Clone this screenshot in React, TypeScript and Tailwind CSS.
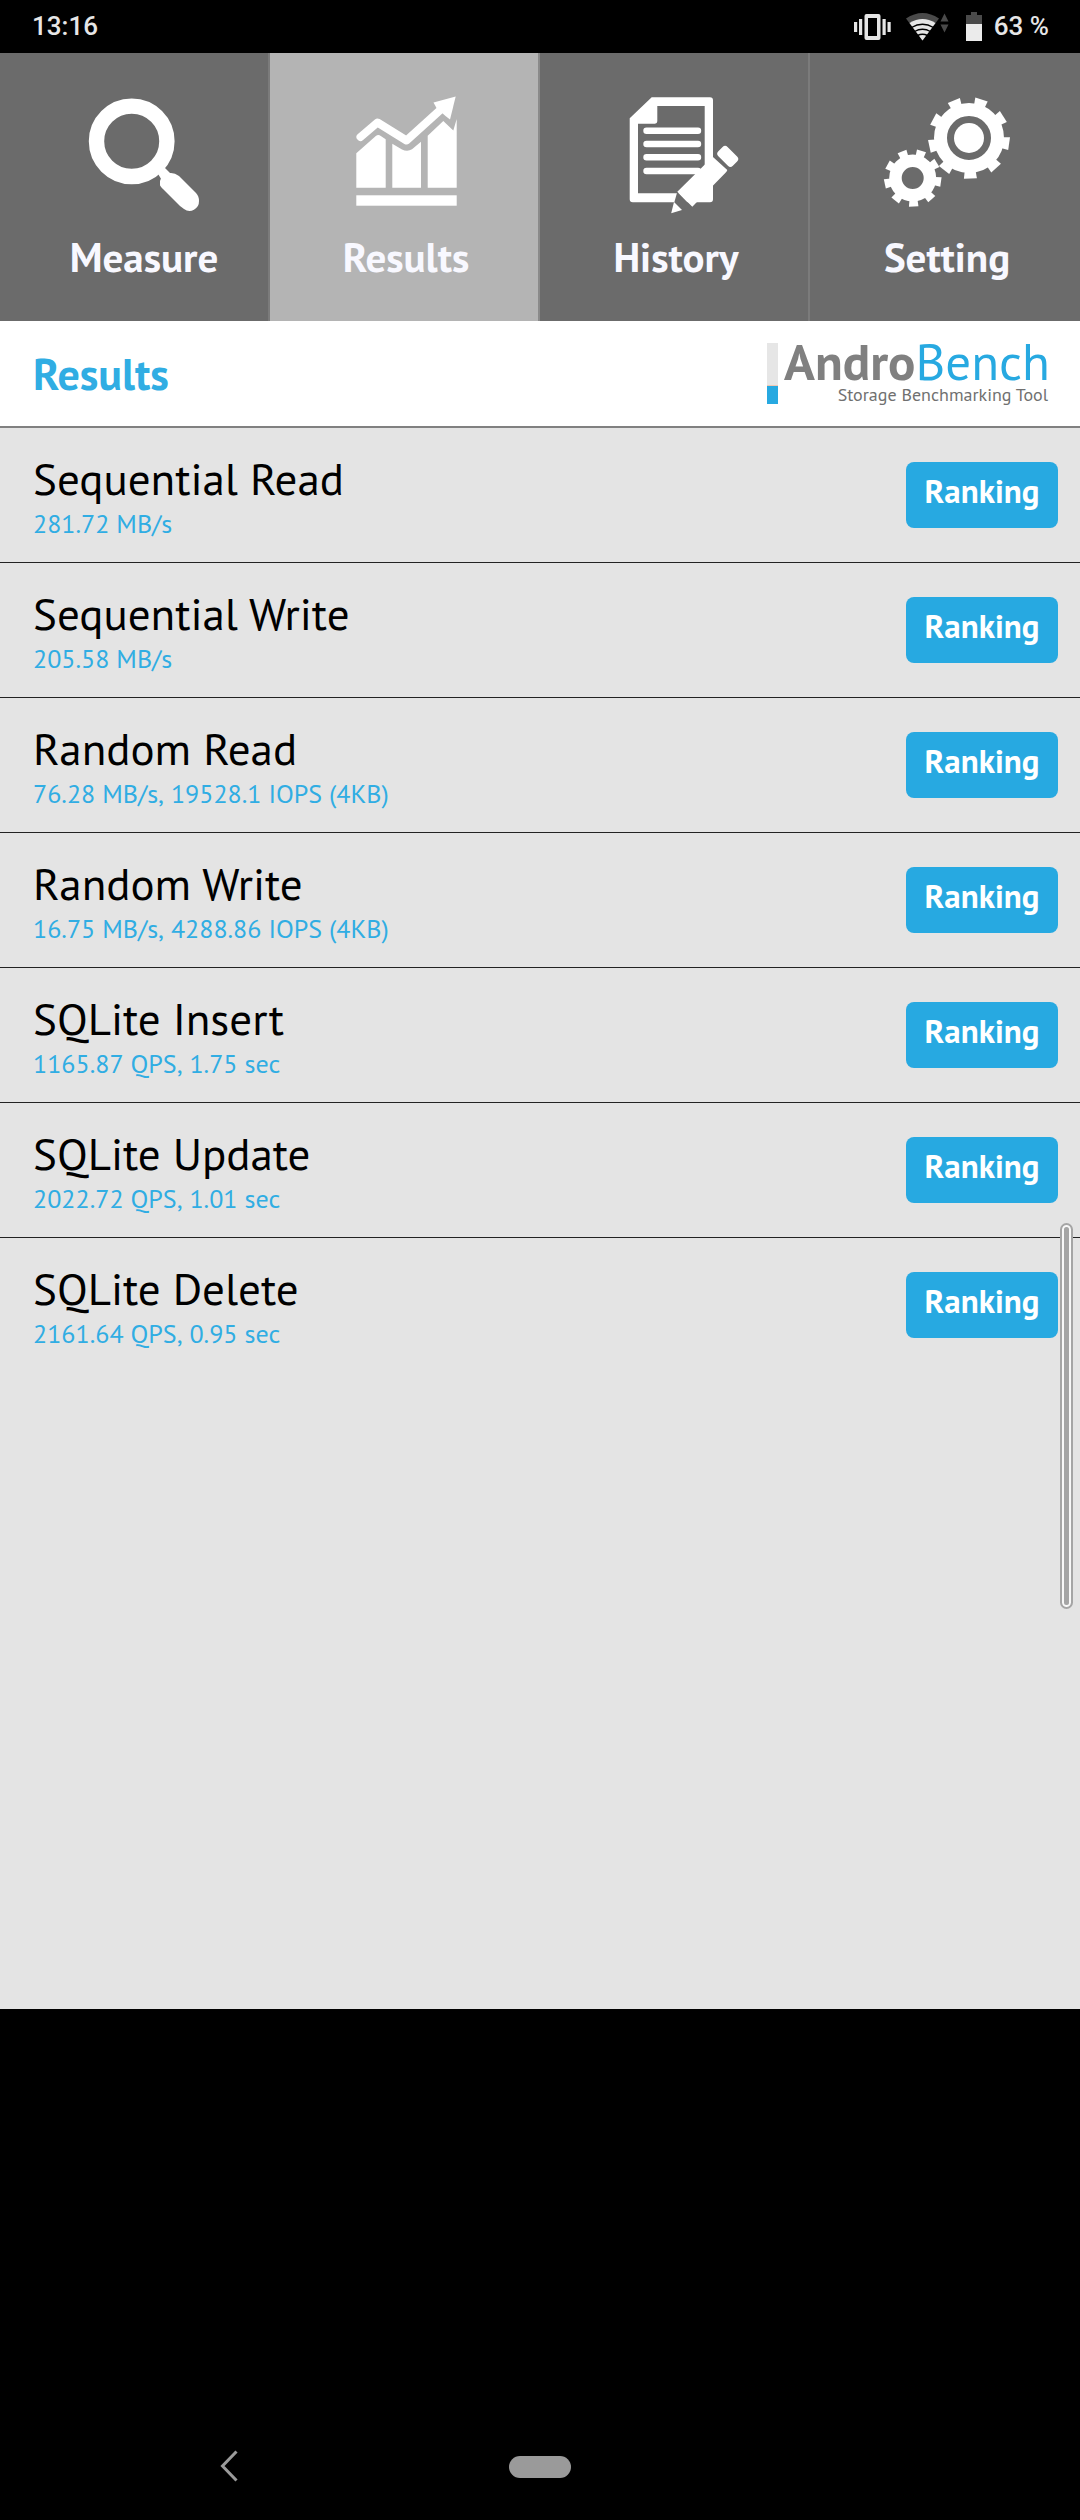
import { ReactNode } from "react";

interface Result {
    name: string;
    value: string;
}

interface Tab {
    label: string;
    icon: ReactNode;
    active?: boolean;
    className: string;
}

const RESULTS: Result[] = [
    { name: "Sequential Read", value: "281.72 MB/s" },
    { name: "Sequential Write", value: "205.58 MB/s" },
    { name: "Random Read", value: "76.28 MB/s, 19528.1 IOPS (4KB)" },
    { name: "Random Write", value: "16.75 MB/s, 4288.86 IOPS (4KB)" },
    { name: "SQLite Insert", value: "1165.87 QPS, 1.75 sec" },
    { name: "SQLite Update", value: "2022.72 QPS, 1.01 sec" },
    { name: "SQLite Delete", value: "2161.64 QPS, 0.95 sec" },
];

const ICON_SIZE = "h-[130px] w-[130px]";

function MeasureIcon() {
    return (
        <svg viewBox="79 90 130 130" className={ICON_SIZE} fill="#fff">
            <circle
                cx="131.7"
                cy="141.3"
                r="35.2"
                fill="none"
                stroke="#fff"
                strokeWidth="15.4"
            />
            <path d="M157 172l6-6 9 9-8 9z" />
            <path d="M160 187v-6q0-2 3-4l3-3q2-1 5-1 4 0 8 3l17 17q3 3 3 8a9.500 9.500 0 0 1-15 8l-4-3-17-17q-3-3-3-4z" />
        </svg>
    );
}

function ResultsIcon() {
    return (
        <svg viewBox="71 90 130 130" className={ICON_SIZE} fill="#fff">
            <path
                d="M90.500 137L107.500 122.500 136.500 140.500 173 107.500"
                fill="none"
                stroke="#fff"
                strokeWidth="8"
                strokeLinecap="round"
                strokeLinejoin="round"
            />
            <path d="M185.700 96.500l-22.200 6 3 5.500 9 8 4.500 3.500z" />
            <path d="M86.300 153.300l19.500-17.300q2.500-2 5 0l4.900 3.300v48.400H86.300z" />
            <path d="M122.300 143.700l9.700 5.800q5.500 2.500 10-.2l9-7.600v46H122.300z" />
            <path d="M157.700 135.700l15.600-14.700 10 9.500 3.400-11.500v68.700h-29z" />
            <rect x="86.300" y="195.300" width="100.400" height="10.400" />
        </svg>
    );
}

function HistoryIcon() {
    return (
        <svg viewBox="71 90 130 130" className={ICON_SIZE} fill="#fff">
            <path
                fillRule="evenodd"
                d="M111.700 97.300H170q3 0 3 3v99q0 3-3 3H92.700q-3 0-3-3v-81zM117.300 106v15.300q0 2.400-2.400 2.400H98v69.600h66.700V106z"
            />
            <path
                d="M106.500 130.700h51.500M106.500 144h51.500M106.500 157.300h51.500M106.500 171h51.500"
                stroke="#fff"
                strokeWidth="6.400"
                strokeLinecap="round"
            />
            <path d="M137.300 191.700l-6 21.300 20.500-6.300z" fill="#6b6b6b" />
            <path d="M134 202l-2.800 11.300 10.800-3.300z" />
            <path d="M137.300 191.700l35.400-35 14.600 13.300q0 1-2 3l-33 33.700z" />
            <rect
                x="177.500"
                y="149.800"
                width="20.500"
                height="13"
                rx="3.500"
                transform="rotate(45 187.700 156.300)"
            />
        </svg>
    );
}

interface GearProps {
    cx: number;
    cy: number;
    root: number;
    tip: number;
    tooth: number;
    hole: number;
}

function Gear({ cx, cy, root, tip, tooth, hole }: GearProps) {
    const ring = (root + hole) / 2;

    return (
        <g transform={`translate(${cx} ${cy})`} fill="#fff">
            <circle
                r={ring}
                fill="none"
                stroke="#fff"
                strokeWidth={root - hole}
            />
            {Array.from({ length: 9 }, (_, i) => (
                <path
                    key={i}
                    d={`M${-tooth * 0.42} ${root - 2}L${-tooth / 2} ${tip}H${
                        tooth / 2
                    }L${tooth * 0.42} ${root - 2}z`}
                    transform={`rotate(${i * 40 - 2})`}
                />
            ))}
        </g>
    );
}

function SettingIcon() {
    return (
        <svg viewBox="71 90 130 130" className={ICON_SIZE}>
            <Gear cx={158} cy={138} root={35} tip={40.5} tooth={13} hole={22} />
            <circle cx="158" cy="138" r="15" fill="#fff" />
            <Gear
                cx={101.7}
                cy={178}
                root={23.5}
                tip={28.5}
                tooth={9.5}
                hole={11}
            />
        </svg>
    );
}

const TABS: Tab[] = [
    { label: "Measure", icon: <MeasureIcon />, className: "pl-5" },
    { label: "Results", icon: <ResultsIcon />, active: true, className: "pl-1" },
    { label: "History", icon: <HistoryIcon />, className: "pl-1" },
    { label: "Setting", icon: <SettingIcon />, className: "pl-1" },
];

function StatusBar() {
    return (
        <div className="flex h-[53px] items-center justify-between bg-black pl-8 pr-[31px] font-['Roboto',sans-serif] text-[26px] font-medium text-[#e6e6e6]">
            <span>13:16</span>
            <div className="flex items-center">
                <svg viewBox="0 0 96 36" className="mr-4 h-9 w-24">
                    <g fill="#e6e6e6">
                        <path
                            fillRule="evenodd"
                            d="M12.500 5h12q2 0 2 2v22q0 2-2 2h-12q-2 0-2-2V7q0-2 2-2zM14 9v18h9V9z"
                        />
                        <rect x="0" y="13" width="3.200" height="10" />
                        <rect x="5" y="10" width="3.200" height="16" />
                        <rect x="28.500" y="10" width="3.200" height="16" />
                        <rect x="33.500" y="13" width="3.200" height="10" />
                    </g>
                    <path
                        d="M52 9.500q16.500-11 33 0L68.500 31.500z"
                        fill="#4a4a4a"
                    />
                    <path d="M55.500 14q13-8 26 0L68.500 31.500z" fill="#e6e6e6" />
                    <path
                        d="M57.500 18.500q11-6.500 22 0M60.500 22.500q8-4.500 16 0M63.500 26.500q5-2.500 10 0"
                        fill="none"
                        stroke="#000"
                        strokeWidth="1.400"
                    />
                    <path
                        d="M86.500 12.500l4-8 4 8zM86.500 15.500h8l-4 8z"
                        fill="#4a4a4a"
                    />
                </svg>
                <svg viewBox="0 0 16 30" className="mr-3 h-[30px] w-4">
                    <path d="M0 3h5V0h6v3h5v9H0z" fill="#4a4a4a" />
                    <path d="M0 12h16v17H0z" fill="#ebebeb" />
                </svg>
                <span>63 %</span>
            </div>
        </div>
    );
}

function TabBar() {
    return (
        <nav className="grid grid-cols-4">
            {TABS.map((tab) => (
                <button
                    key={tab.label}
                    className={`flex h-[268px] flex-col items-center border-r-2 pt-[37px] last:border-r-0 ${
                        tab.active
                            ? "border-[#8a8a8a] bg-[#b4b4b4]"
                            : "border-[#7b7b7b] bg-[#6b6b6b]"
                    } ${tab.className}`}
                >
                    {tab.icon}
                    <span className="mt-[13px] text-[41px] font-bold leading-[48px] text-[#f8f8ff]">
                        {tab.label}
                    </span>
                </button>
            ))}
        </nav>
    );
}

function Logo() {
    return (
        <div className="flex items-end gap-[6px]">
            <div className="flex h-[61px] w-[11px] flex-col">
                <div className="grow border-b border-[#f0c8b4] bg-[#e6e6e6]" />
                <div className="h-[18px] bg-[#27a9e1]" />
            </div>
            <div className="text-right">
                <div className="mb-px text-[51px] leading-[48px] text-[#27a9e1]">
                    <b className="text-[#808080]">Andro</b>Bench
                </div>
                <div className="pr-[2px] text-[18px] leading-[18px] text-[#707070]">
                    Storage Benchmarking Tool
                </div>
            </div>
        </div>
    );
}

export default function App() {
    return (
        <div className="flex min-h-screen flex-col bg-black font-['PT_Sans','Lato',sans-serif]">
            <StatusBar />
            <TabBar />

            <header className="flex h-[107px] items-center justify-between border-b-2 border-[#808080] bg-white pl-[33px] pr-[30px]">
                <h1 className="text-[44px] font-bold text-[#30ade3]">
                    Results
                </h1>
                <div className="self-end pb-[22px]">
                    <Logo />
                </div>
            </header>

            <main className="relative grow bg-[#e4e4e4]">
                <ul className="divide-y divide-[#222]">
                    {RESULTS.map((result) => (
                        <li
                            key={result.name}
                            className="flex items-center justify-between pb-[22px] pl-[33px] pr-[22px] pt-[22px]"
                        >
                            <div>
                                <div className="text-[45px] leading-[57px] text-black">
                                    {result.name}
                                </div>
                                <div className="mt-px text-[26px] leading-8 text-[#30ade3] [font-kerning:none]">
                                    {result.value}
                                </div>
                            </div>
                            <button className="h-[66px] w-[152px] rounded-lg bg-[#27a9e1] pb-2 text-[33px] font-bold leading-[58px] text-white">
                                Ranking
                            </button>
                        </li>
                    ))}
                </ul>
                <div className="absolute right-[7px] top-[795px] h-[386px] w-[13px] rounded-full border-2 border-[#a5a5a5] p-[2px] ring-2 ring-inset ring-[#f8f8f8]">
                    <div className="h-full rounded-full bg-[#a5a5a5]" />
                </div>
            </main>

            <footer className="grid h-[511px] grid-cols-3 items-end pb-[38px]">
                <button
                    aria-label="Back"
                    className="flex justify-end pr-[122px]"
                >
                    <svg viewBox="0 0 18 32" className="h-8 w-[18px]">
                        <path
                            d="M16.500 1.500L2.500 16l14 14.500"
                            fill="none"
                            stroke="#9a9a9a"
                            strokeWidth="3"
                        />
                    </svg>
                </button>
                <button aria-label="Home" className="flex justify-center pb-1">
                    <span className="h-[22px] w-[62px] rounded-full bg-[#9a9a9a]" />
                </button>
            </footer>
        </div>
    );
}
